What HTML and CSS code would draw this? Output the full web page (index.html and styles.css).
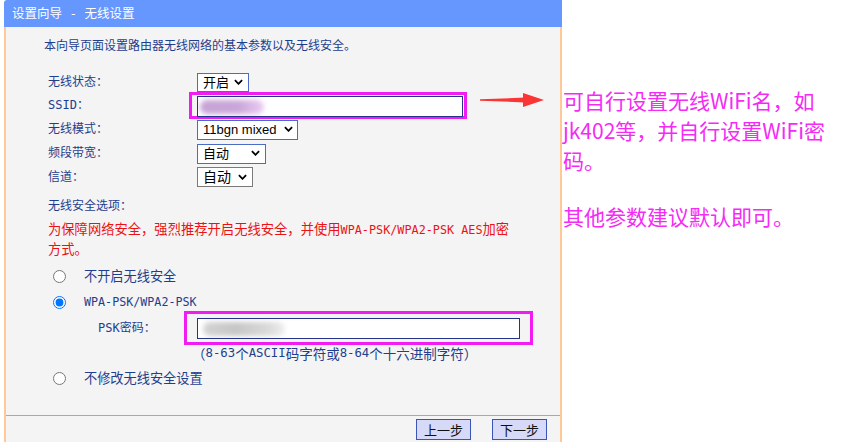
FILE: index.html
```html
<!DOCTYPE html>
<html lang="zh-CN">
<head>
<meta charset="utf-8">
<title>设置向导 - 无线设置</title>
<link rel="stylesheet" href="styles.css">
</head>
<body>
<div class="page">
  <section class="panel">
    <div class="panel-head">设置向导 - 无线设置</div>
    <div class="panel-body">
      <p class="intro">本向导页面设置路由器无线网络的基本参数以及无线安全。</p>
      <div class="form-grid">
        <span class="label">无线状态：</span>
        <span class="sel sel-state"><select><option>开启</option><option>关闭</option></select><svg class="chev" viewBox="0 0 10 6"><path d="M1 1 L5 5 L9 1"/></svg></span>

        <span class="label">SSID：</span>
        <span class="hl hl-ssid"><span class="field field-ssid"><span class="blur blur-purple"></span></span></span>

        <span class="label">无线模式：</span>
        <span class="sel sel-mode"><select class="latin"><option>11bgn mixed</option></select><svg class="chev" viewBox="0 0 10 6"><path d="M1 1 L5 5 L9 1"/></svg></span>

        <span class="label">频段带宽：</span>
        <span class="sel sel-bw"><select><option>自动</option></select><svg class="chev" viewBox="0 0 10 6"><path d="M1 1 L5 5 L9 1"/></svg></span>

        <span class="label">信道：</span>
        <span class="sel sel-ch"><select><option>自动</option></select><svg class="chev" viewBox="0 0 10 6"><path d="M1 1 L5 5 L9 1"/></svg></span>
      </div>

      <p class="opt-title">无线安全选项：</p>
      <p class="warn">为保障网络安全，强烈推荐开启无线安全，并使用<span class="asc">WPA-PSK/WPA2-PSK AES</span>加密<br>方式。</p>

      <div class="sec-list">
        <label class="radio-row"><input type="radio" name="sec"><span class="rlabel">不开启无线安全</span></label>
        <label class="radio-row"><input type="radio" name="sec" checked><span class="rlabel mono">WPA-PSK/WPA2-PSK</span></label>
        <div class="psk-row"><span class="psk-label">PSK密码：</span><span class="hl hl-psk"><span class="field field-psk"><span class="blur blur-grey"></span></span></span></div>
        <div class="hint">（<span class="asc">8-63</span>个<span class="asc">ASCII</span>码字符或<span class="asc">8-64</span>个十六进制字符）</div>
        <label class="radio-row"><input type="radio" name="sec"><span class="rlabel">不修改无线安全设置</span></label>
      </div>

      <div class="panel-foot">
        <button class="btn">上一步</button>
        <button class="btn">下一步</button>
      </div>
    </div>
    <svg class="arrow" viewBox="0 0 64 16" width="64" height="16"><polygon points="0,7.2 45,5.6 45,10.4 0,8.8"/><polygon points="43,1 64,8 43,15"/></svg>
  </section>
  <aside class="note">
    <p>可自行设置无线WiFi名，如<br>jk402等，并自行设置WiFi密<br>码。</p>
    <p class="note-2">其他参数建议默认即可。</p>
  </aside>
</div>
</body>
</html>
```

FILE: styles.css
```css
html, body {
  margin: 0;
  padding: 0;
  background: #ffffff;
  overflow: hidden;
  height: 442px;
}

p { margin: 0; }

.page {
  display: flex;
  align-items: flex-start;
  font-family: "Noto Sans CJK SC", sans-serif;
}

.panel {
  position: relative;
  margin-left: 4px;
  width: 558px;
  flex: none;
}

.panel-head {
  height: 27px;
  line-height: 27px;
  background: #6597ff;
  color: #ffffff;
  font-family: "DejaVu Sans Mono", "Noto Sans CJK SC", monospace;
  font-size: 12.5px;
  padding-left: 8px;
  border-top-left-radius: 3px;
  white-space: pre;
}

.panel-body {
  display: flow-root;
  background: #f4f4f4;
  border-left: 2px solid #ffc894;
  border-right: 2px solid #ffc894;
  padding-bottom: 40px;
  color: #1f3e8e;
  font-family: "DejaVu Sans Mono", "Noto Sans CJK SC", monospace;
}

.intro {
  margin: 11px 0 0 38px;
  font-size: 12px;
  line-height: 16px;
}

.form-grid {
  margin-top: 16px;
  padding-left: 42px;
  display: grid;
  grid-template-columns: 149px auto;
  grid-template-rows: 23px 24px 24px 24px 24px;
  align-items: center;
  justify-items: start;
}

.label {
  font-size: 12px;
  line-height: 16px;
}

.sel {
  position: relative;
  display: inline-block;
  height: 20px;
}

.sel select {
  -webkit-appearance: none;
  appearance: none;
  width: 100%;
  height: 100%;
  margin: 0;
  padding: 0 0 0 5px;
  border: 1px solid #4a6cc6;
  border-radius: 0;
  background: #ffffff;
  color: #000000;
  font-family: "Liberation Sans", "Noto Sans CJK SC", sans-serif;
  font-size: 13px;
  line-height: 18px;
  box-sizing: border-box;
}

.sel .chev {
  position: absolute;
  right: 6px;
  top: 7px;
  width: 9px;
  height: 6px;
  fill: none;
  stroke: #000000;
  stroke-width: 2;
  pointer-events: none;
}

.sel-state { width: 52px; height: 19px; }
.sel-mode { width: 101px; }
.sel-mode .chev { right: 5px; }
.sel-bw { width: 69px; }
.sel-ch { width: 56px; }
.sel-ch select { border-color: #7a7a7a; font-size: 14px; }

.hl {
  display: inline-flex;
  border: 3px solid #f21cf2;
  box-sizing: border-box;
}

.hl-ssid {
  margin-left: -8px;
  width: 278px;
  height: 27px;
  padding: 1px 1px 1px 5px;
}

.field {
  position: relative;
  display: block;
  background: #ffffff;
  border: 1px solid #24348a;
  box-sizing: border-box;
  overflow: hidden;
}

.field-ssid {
  width: 266px;
  height: 21px;
}

.blur {
  position: absolute;
  top: 3px;
  height: 14px;
  border-radius: 7px;
  filter: blur(2.5px);
}

.blur-purple {
  left: 2px;
  width: 64px;
  background: linear-gradient(90deg, #c7a3d6 0%, #c9a6d9 60%, #ecccf4 100%);
}

.blur-grey {
  left: 5px;
  width: 82px;
  background: linear-gradient(90deg, #d4d4d4 0%, #c6c6c6 40%, #dadada 80%, #eeeeee 100%);
}

.opt-title {
  margin-top: 9px;
  padding-left: 42px;
  font-size: 12px;
  line-height: 16px;
}

.warn {
  margin-top: 6px;
  padding-left: 42px;
  font-size: 13.3px;
  line-height: 20px;
  color: #ee1111;
}

.asc {
  font-family: "DejaVu Sans Mono", monospace;
  font-size: 11.8px;
}

.sec-list {
  margin-top: 4px;
  padding-left: 47px;
}

.radio-row,
.psk-row,
.hint {
  height: 25.5px;
  display: flex;
  align-items: center;
}

.radio-row input {
  margin: 0;
  width: 13px;
  height: 13px;
  flex: none;
}

.rlabel {
  margin-left: 18px;
  font-size: 13.2px;
  line-height: 16px;
}

.rlabel.mono {
  font-family: "DejaVu Sans Mono", monospace;
  font-size: 11.7px;
}

.psk-label {
  margin-left: 45px;
  width: 86px;
  font-size: 12px;
  line-height: 16px;
  flex: none;
}

.hl-psk {
  width: 349px;
  height: 34px;
  padding: 4px 10px 4px 10px;
  flex: none;
}

.field-psk {
  width: 323px;
  height: 21px;
}

.hint {
  padding-left: 139px;
  font-size: 13.5px;
}

.hint .asc {
  font-size: 12.3px;
}

.panel-foot {
  margin-top: 23.5px;
  border-top: 1px solid #ff9a12;
  padding: 3px 13px 0 0;
  display: flex;
  justify-content: flex-end;
  gap: 21px;
}

.btn {
  width: 55px;
  height: 21px;
  margin: 0;
  padding: 0;
  background: #d6d9f7;
  border: 1px solid #3a55b6;
  border-radius: 0;
  color: #111111;
  font-family: "Noto Sans CJK SC", sans-serif;
  font-size: 13px;
  line-height: 19px;
}

.arrow {
  position: absolute;
  left: 476px;
  top: 92px;
  fill: #fb3434;
}

.note {
  padding: 85px 0 0 1px;
  color: #f52af5;
  font-size: 21px;
  line-height: 30px;
}

.note-2 {
  margin-top: 26px;
}
```
